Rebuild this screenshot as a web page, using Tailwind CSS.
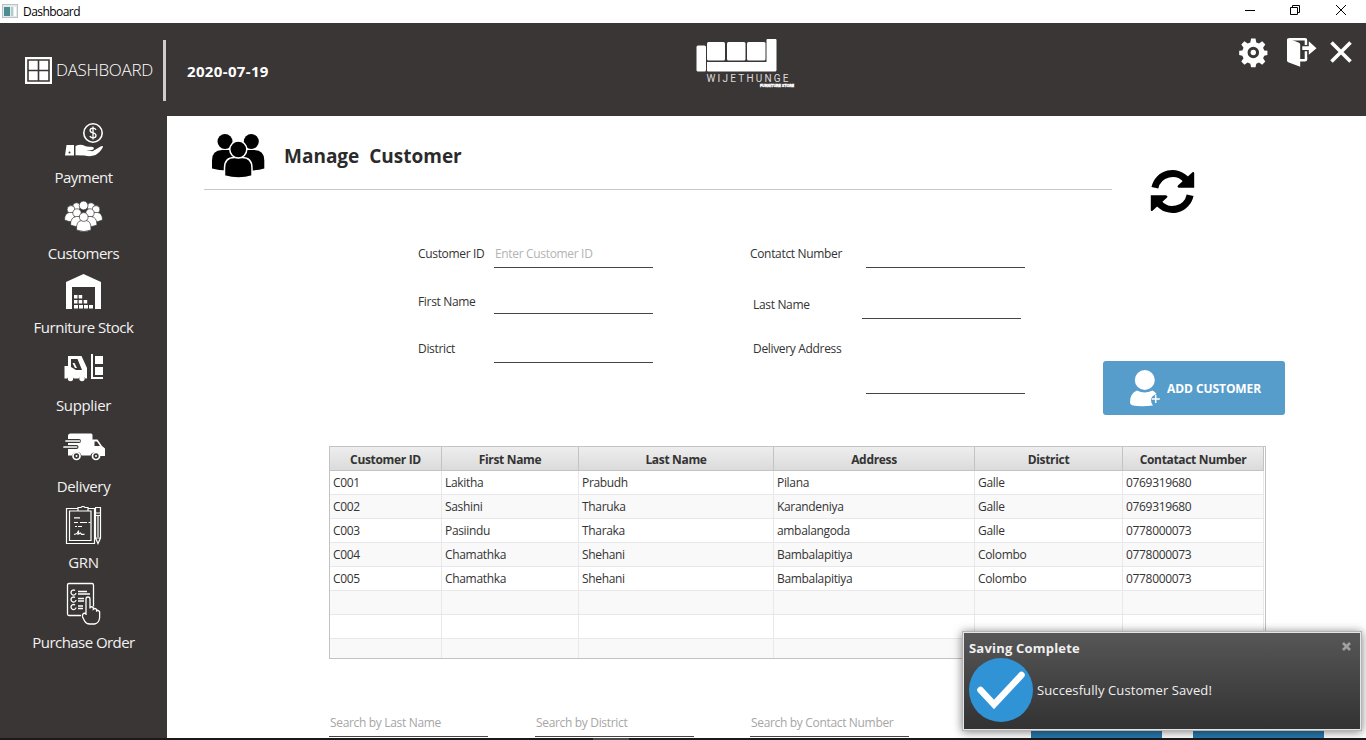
<!DOCTYPE html>
<html lang="en">
<head>
<meta charset="utf-8">
<title>Dashboard</title>
<script src="https://cdn.jsdelivr.net/npm/@tailwindcss/browser@4"></script>
</head>
<body class="bg-white">
<div class="relative flex h-[740px] w-[1366px] flex-col overflow-hidden bg-white font-['Open_Sans','Noto_Sans',sans-serif] text-[12px] text-[#333333]">

  <!-- Window title bar -->
  <div class="flex h-[23px] shrink-0 items-center bg-white text-black">
    <svg class="mb-[2px] ml-[2px] h-[14px] w-[16px]" viewBox="0 0 16 14"><rect x=".5" y=".5" width="15" height="13" fill="#e4eaec" stroke="#b9c2c6"/><rect x="2" y="3" width="6" height="9" fill="#4b8d90"/><rect x="9" y="3" width="2" height="9" fill="#a9d0cb"/><rect x="12" y="3" width="2" height="9" fill="#fff"/></svg>
    <span class="ml-[5px] text-[12px] leading-[20px] tracking-[-0.55px]">Dashboard</span>
    <svg class="ml-auto h-[23px] w-[126px]" viewBox="1240 0 126 23" fill="none" stroke="#000"><path d="M1245 10.500h10M1290.500 7.500h7v7h-7zM1292.500 7.500v-2h7v7h-2M1336 5l10 10M1346 5l-10 10"/></svg>
  </div>

  <!-- Header -->
  <header class="flex h-[93px] shrink-0 items-start bg-[#3a3635] text-white">
    <svg class="mt-[34px] ml-[25px] h-[27px] w-[27px]" viewBox="0 0 27 27"><rect width="27" height="27" fill="#fff"/><path d="M3 3h21v21H3zM13.500 3v21M3 13.500h21" fill="none" stroke="#3a3635" stroke-width="1.600"/></svg>
    <span class="mt-[35px] ml-[4px] w-[103px] whitespace-nowrap text-[17px] leading-[24px] font-light tracking-[-0.3px]">DASHBOARD</span>
    <div class="mt-[17px] ml-[4px] h-[61px] w-[3px] bg-[#cfcccc]"></div>
    <span class="mt-[36px] ml-[21px] w-[100px] whitespace-nowrap text-[15px] leading-[24px] font-bold tracking-[0.35px]">2020-07-19</span>
    <svg class="mt-[14px] ml-[408px] h-[54px] w-[102px]" viewBox="695 37 102 54" fill="#fff">
      <rect x="696.500" y="45.500" width="9.500" height="26" rx="1.500"/>
      <rect x="707" y="42" width="18" height="18.500" rx="1.500"/><rect x="727" y="42" width="18.500" height="18.500" rx="1.500"/><rect x="747" y="42" width="18.500" height="18.500" rx="1.500"/>
      <path d="M707 62h59.500V40q0-1 1-1h8q1 0 1 1V70q0 1.500-1.500 1.500H708q-1 0-1-1z"/>
      <text x="706.500" y="81.500" font-family="Roboto, sans-serif" font-size="10" textLength="82" fill="#dedcdc">WIJETHUNGE</text>
      <text x="760" y="87.300" font-family="Roboto, sans-serif" font-weight="900" font-size="4" textLength="34" stroke="#fff" stroke-width=".3">FURNITURE STORE</text>
    </svg>
    <svg class="mt-[10px] ml-auto h-[40px] w-[131px]" viewBox="1235 33 131 40" fill="#fff">
      <g transform="translate(1253.300 52.500) scale(.96)">
        <path fill-rule="evenodd" d="M-2.300-14.500h4.600l.8 4 2.800 1.200 3.400-2.300 3.200 3.200-2.300 3.400 1.200 2.800 3.300.5v4.400l-3.300.6-1.200 2.800 2.300 3.400-3.200 3.200-3.400-2.300-2.800 1.200-.8 3.800h-4.600l-.8-3.800-2.800-1.200-3.400 2.300-3.200-3.200 2.300-3.400-1.200-2.800-3.300-.6v-4.400l3.300-.5 1.200-2.800-2.300-3.400 3.200-3.200 3.400 2.300 2.800-1.200zM6 0A6 6 0 1 0-6 0 6 6 0 1 0 6 0z"/><circle r="2.800"/>
      </g>
      <path d="M1288.500 39.300h16.500q1 0 1 1v19q0 1-1 1h-6" fill="none" stroke="#fff" stroke-width="2.600"/>
      <path d="M1287 39.500q0-1.500 1.500-1l10.500 4.300q1.200.5 1.200 2v22l-12-4.600q-1.200-.5-1.200-2z"/>
      <path d="M1302.300 46.200h6.500v-5l7.700 7-7.700 6.600v-4.800h-6.500z" stroke="#3a3635" stroke-width="2.400" paint-order="stroke"/>
      <path d="M1331.500 42.500l19 19M1350.500 42.500l-19 19" stroke="#fff" stroke-width="3.600"/>
    </svg>
  </header>

  <div class="flex min-h-0 flex-1">
    <!-- Sidebar -->
    <nav class="flex w-[167px] shrink-0 flex-col items-center bg-[#3a3635] text-[15px] leading-[20px] tracking-[-0.5px] text-[#f2f2f2]">
      <svg class="mt-[7px] h-[35px] w-[39px]" viewBox="64 123 39 35" fill="#fff">
        <circle cx="93" cy="133" r="9.200" fill="none" stroke="#fff" stroke-width="1.600"/>
        <path d="M96 129.800q-1-1.600-3-1.600-2.900 0-2.900 2.300 0 1.800 2.900 2.400 3 .6 3 2.700 0 2.300-3 2.300-2.200 0-3.200-1.700M93 126.500v13" fill="none" stroke="#fff" stroke-width="1.300"/>
        <path d="M66.500 145h7.500v10.500h-9zM75.500 146q5-2.500 9-.3 2.500 1.300 6 1 3.500-.2 3.500 1.500t-3 2l-5 .3 6.500.7 8.500-5q2-.6 2 .8-3 5.500-7.500 8-5 2-11 .5l-9-.3z"/><circle cx="69.500" cy="152.500" r="1" fill="#3a3635"/>
      </svg>
      <span class="mt-[9px]">Payment</span>
      <svg class="mt-[14px] h-[31px] w-[39px]" viewBox="64 201 39 31" fill="#fff" stroke="#3a3635" stroke-width=".7">
        <circle cx="76.500" cy="206.500" r="3.800"/><circle cx="91" cy="206.500" r="3.800"/><circle cx="83.600" cy="205.500" r="4.400"/>
        <circle cx="71" cy="209.500" r="3.900"/><circle cx="96" cy="209.500" r="3.900"/>
        <path d="M73 222q-4 0-8.500-2 0-7 5-7.500h6zM94 222q4 0 8.500-2 0-7-5-7.500h-6z"/>
        <circle cx="77" cy="213" r="4.200"/><circle cx="90" cy="213" r="4.200"/>
        <path d="M70.500 225q0-8 6-8.500h6v10q-7 1-12-1.500zM97 225q0-8-6-8.500h-6v10q7 1 12-1.500z"/>
        <path d="M76.500 230q-.5-9 5-9.500h4.500q5.500.5 5 9.500-7 3-14.500 0z"/><circle cx="83.700" cy="217" r="4.400"/>
      </svg>
      <span class="mt-[11px]">Customers</span>
      <svg class="mt-[10px] h-[37px] w-[37px]" viewBox="65 273 37 37" fill="#fff"><path d="M66 309v-27l17.500-8L101 282v27h-6v-22H72v22z"/><path d="M74 295h3.500v3.500H74zM78.700 295h3.500v3.500h-3.500zM74 300h3.500v3.500H74zM78.700 300h3.500v3.500h-3.500zM83.700 300h3.500v3.500h-3.500zM74 305h4v3.500h-4zM79 305h4v3.500h-4zM84 305h4v3.500h-4zM89 305h4v3.500h-4z"/></svg>
      <span class="mt-[7px] tracking-[-0.45px]">Furniture Stock</span>
      <svg class="mt-[16px] h-[30px] w-[41px]" viewBox="63 353 41 30" fill="#fff">
        <path fill-rule="evenodd" d="M64.500 366h3.500v-10h13.500l5.500 12v10.500h-1.500a4 4 0 0 0-7 0H74a4 4 0 0 0-7 0h-2.500zM71 359v8l5 3h6l-4.500-11zM72.500 363h2l2.500 5h-2z"/>
        <circle cx="70.500" cy="378.500" r="2.700"/><circle cx="82" cy="378.500" r="2.700"/>
        <path d="M91 354h2v23h10v2H91zM95 356h8v8h-8zM95 367h8v8h-8z"/>
      </svg>
      <span class="mt-[12px] tracking-[-0.35px]">Supplier</span>
      <svg class="mt-[17px] h-[29px] w-[43px]" viewBox="62 432 43 29" fill="#fff">
        <path d="M68 436q0-2.500 2.500-2.500H91q1.500 0 1.500 1.500v4.500h5l4.500 6.500 3 2.500v7.500h-5a5 5 0 0 0-9.500-.5H81.500a5 5 0 0 0-9.500 0H68z"/>
        <path d="M94.500 441.500h2.500l3 4.500h-5.500z" fill="#3a3635"/>
        <g stroke="#3a3635" stroke-width="4" stroke-linecap="round"><path d="M66 441h13M64.500 447h12"/></g>
        <g stroke="#fff" stroke-width="1.700" stroke-linecap="round"><path d="M66 441h13.500M64 447h12.500"/></g>
        <g fill="#3a3635" stroke="#fff" stroke-width="1.700"><circle cx="76.500" cy="456" r="3.500"/><circle cx="96" cy="456" r="3.500"/></g><circle cx="76.500" cy="456" r="1"/><circle cx="96" cy="456" r="1"/>
      </svg>
      <span class="mt-[15px] tracking-[-0.35px]">Delivery</span>
      <svg class="mt-[10px] h-[39px] w-[37px]" viewBox="65 506 37 39" fill="none" stroke="#fff" stroke-width="1.200">
        <path d="M78 508.500H66.500v35h28v-35H88M78 507.500h3q.5-1 2-1t2 1h3v3.500H78zM78 511h-8.500v29.500H91V511h-3M95.500 513v-5.500h5V538l-2.500 5.500-2.500-5.500v-25h5M95.500 515.500h5M98 516v21M95.500 538h5"/>
        <path d="M74 517.800h6M74 522.500h4M80 522.500h7M88.500 522.500h2M75 526.500h2M78 526.500h4M74 534.500q4-.5 4.500-4 .3 4-1 4l3-1.500 1 1.300h3"/>
      </svg>
      <span class="mt-[7px] tracking-[-0.35px]">GRN</span>
      <svg class="mt-[10px] h-[43px] w-[35px]" viewBox="66 582 35 43" fill="none" stroke="#fff" stroke-width="1.300">
        <path d="M81 615.500H69q-1.500 0-1.500-1.500v-29q0-1.500 1.500-1.500h23q1.500 0 1.500 1.500v21.500"/>
        <path d="M75 590.500a2.500 2.500 0 1 0 1 2.500M75 597.500a2.500 2.500 0 1 0 1 2.500M75 605a2.500 2.500 0 1 0 1 2.500M78 591.500h9M78 594h12M78 598.500h6M78 601h6M78 606h5M78 608.500h5"/>
        <path d="M86 613v-14q0-2 2-2t2 2v9.500-1q1.500-1.500 3.300.2v1.500q1.500-1.500 3.300.2v1.500q1.500-1 3 .8v6q-.5 5.500-5 6.300h-5q-3.500 0-5-3l-2-4q-1-4 3.400-4zM86 609v6" fill="#3a3635"/>
      </svg>
      <span class="mt-[7px] tracking-[-0.55px]">Purchase Order</span>
    </nav>

    <!-- Content -->
    <main class="flex min-w-0 flex-1 flex-col">
      <div class="flex h-[113px] shrink-0 items-start">
        <div class="ml-[37px] flex h-[74px] w-[908px] items-start border-b border-[#c8c8c8]">
          <svg class="mt-[17px] ml-[7px] h-[46px] w-[55px]" viewBox="211 133 55 46">
            <circle cx="225" cy="141.500" r="7.500"/><circle cx="251.300" cy="141.500" r="7.500"/>
            <path d="M212 168.500v-8q0-10.500 10-10.500h8q6 0 9 4v15.500q-15 2.500-27-1zM264.300 168.500v-8q0-10.500-10-10.500h-8q-6 0-9 4v15.500q15 2.500 27-1z"/>
            <path d="M224.500 176v-8q0-10.500 10-10.500h7.500q10 0 10 10.500v8q-13 4-27.500 0z" stroke="#fff" stroke-width="1.500"/>
            <circle cx="238.300" cy="149.500" r="8.500" stroke="#fff" stroke-width="1.500"/>
          </svg>
          <h1 class="mt-[26px] ml-[18px] text-[19px] leading-[28px] font-bold whitespace-pre text-[#2b2b2b]">Manage  Customer</h1>
        </div>
        <svg class="mt-[53px] ml-[38px] h-[46px] w-[46px]" viewBox="1150 169 46 46">
          <path d="M1154.900 187.800a18 18 0 0 1 31.600-7.600M1190.100 195.200a18 18 0 0 1-31.600 7.600" fill="none" stroke="#000" stroke-width="7"/>
          <path d="M1192.500 172.300q1.700-1 1.700 1v14.500h-15q-2.700-.8-1-2.600zM1152.500 210.700q-1.700 1-1.700-1v-14.500h15q2.700.8 1 2.600z"/>
        </svg>
      </div>

      <div class="flex h-[217px] shrink-0 items-start tracking-[-0.33px]">
        <div class="ml-[251px] flex w-[235px] flex-col pt-[15px] leading-[20px]">
          <div class="flex h-[24px] justify-between"><label>Customer ID</label><div class="w-[159px] border-b border-[#444444] pl-[1px] text-[#b3b3b3]">Enter Customer ID</div></div>
          <div class="mt-[23px] flex h-[23px] justify-between"><label class="pt-[1px]">First Name</label><div class="w-[159px] border-b border-[#444444]"></div></div>
          <div class="mt-[24px] flex h-[25px] justify-between"><label class="pt-[1px]">District</label><div class="w-[159px] border-b border-[#444444]"></div></div>
        </div>
        <div class="ml-[97px] flex w-[275px] flex-col pt-[15px] leading-[20px]">
          <div class="flex h-[24px] justify-between"><label>Contatct Number</label><div class="w-[159px] border-b border-[#444444]"></div></div>
          <div class="mt-[26px] flex h-[25px] justify-between pr-[4px] pl-[3px]"><label class="pt-[1px]">Last Name</label><div class="w-[159px] border-b border-[#444444]"></div></div>
          <div class="mt-[20px] flex h-[55px] justify-between pl-[3px]"><label>Delivery Address</label><div class="w-[159px] border-b border-[#444444]"></div></div>
        </div>
        <button class="mt-[132px] ml-[78px] flex h-[54px] w-[182px] items-center rounded-[3px] bg-[#579dcc] text-[12px] font-bold text-white">
          <svg class="ml-[26px] h-[38px] w-[32px]" viewBox="1129 369 32 38" fill="#fff"><circle cx="1144.800" cy="380" r="10"/><path d="M1130 402q0-8.500 7-11.500 7.500 4 15.500 0 2.500 1 4 3.500-5.500 2-5.500 6 0 3.500 2 5.500-12 1.500-20 0-3-1-3-3.500z"/><path d="M1155.700 395v8M1151.800 399h8" stroke="#fff" stroke-width="1.500"/></svg>
          <span class="mt-[2px] ml-[6px] whitespace-nowrap tracking-[-0.07px]">ADD CUSTOMER</span>
        </button>
      </div>

      <!-- Customer table -->
      <div class="ml-[162px] h-[213px] w-[937px] shrink-0 overflow-hidden border border-[#c3c3c3] bg-white">
        <table class="w-[934px] table-fixed border-separate border-spacing-0 leading-[20px] tracking-[-0.33px] [&_td]:h-[24px] [&_td]:border-r [&_td]:border-b [&_td]:border-[#e8e8ea] [&_td]:p-0 [&_td]:pl-[3px] [&_th]:h-[24px] [&_th]:border-r [&_th]:border-b [&_th]:border-[#c3c3c3] [&_th]:p-0 [&_th]:pt-[2px] [&_th]:leading-[18px] [&_tbody_tr:nth-child(even)]:bg-[#f9f9f9]">
          <colgroup><col class="w-[112px]"><col class="w-[137px]"><col class="w-[195px]"><col class="w-[201px]"><col class="w-[148px]"><col class="w-[141px]"></colgroup>
          <thead class="bg-linear-to-b from-[#eeeeee] to-[#dadada] font-bold"><tr><th>Customer ID</th><th>First Name</th><th>Last Name</th><th>Address</th><th>District</th><th>Contatact Number</th></tr></thead>
          <tbody>
            <tr><td>C001</td><td>Lakitha</td><td>Prabudh</td><td>Pilana</td><td>Galle</td><td>0769319680</td></tr>
            <tr><td>C002</td><td>Sashini</td><td>Tharuka</td><td>Karandeniya</td><td>Galle</td><td>0769319680</td></tr>
            <tr><td>C003</td><td>Pasiindu</td><td>Tharaka</td><td>ambalangoda</td><td>Galle</td><td>0778000073</td></tr>
            <tr><td>C004</td><td>Chamathka</td><td>Shehani</td><td>Bambalapitiya</td><td>Colombo</td><td>0778000073</td></tr>
            <tr><td>C005</td><td>Chamathka</td><td>Shehani</td><td>Bambalapitiya</td><td>Colombo</td><td>0778000073</td></tr>
            <tr><td></td><td></td><td></td><td></td><td></td><td></td></tr>
            <tr><td></td><td></td><td></td><td></td><td></td><td></td></tr>
            <tr><td></td><td></td><td></td><td></td><td></td><td></td></tr>
          </tbody>
        </table>
      </div>

      <!-- Search fields and actions -->
      <div class="flex h-[79px] shrink-0 items-start pt-[54px] leading-[20px] tracking-[-0.33px] text-[#a6a6a6]">
        <div class="ml-[162px] h-[24px] w-[159px] border-b border-[#444444] pl-[1px]">Search by Last Name</div>
        <div class="ml-[47px] h-[24px] w-[159px] border-b border-[#444444] pl-[1px]">Search by District</div>
        <div class="ml-[56px] h-[24px] w-[159px] border-b border-[#444444] pl-[1px]">Search by Contact Number</div>
        <div class="mt-[10px] ml-[122px] h-[15px] w-[131px] bg-[#2778ad]"></div>
        <div class="mt-[10px] ml-[31px] h-[15px] w-[131px] bg-[#2778ad]"></div>
      </div>
    </main>
  </div>

  <div class="flex h-[2px] shrink-0 bg-[#1b1919]"><div class="ml-[593px] w-[36px] bg-[#4a4848]"></div></div>

  <!-- Notification -->
  <div class="absolute top-[631px] left-[962px] flex h-[100px] w-[400px] flex-col border border-[#b4b4b4] bg-linear-to-b from-[#575757] to-[#323232] text-[#f0f0f0] shadow-[0_1px_9px_rgba(0,0,0,0.5)] ring-1 ring-[#e6e6e6] ring-inset">
    <div class="flex h-[25px] items-center pl-[6px]">
      <span class="mt-[7px] text-[13px] leading-[20px] font-bold tracking-[0.2px]">Saving Complete</span>
      <svg class="mt-[4px] mr-[10px] ml-auto h-[9px] w-[9px]" viewBox="0 0 9 9"><path d="M1 1l7 7M8 1L1 8" stroke="#a0a0a0" stroke-width="2.600"/></svg>
    </div>
    <div class="flex items-center pl-[6px]">
      <svg class="h-[66px] w-[64px]" viewBox="969 657 64 66"><circle cx="1001" cy="690" r="32" fill="#3093d6"/><path d="M980.500 690l13.500 14.500 27.500-29.500" fill="none" stroke="#fff" stroke-width="6.500" stroke-linecap="round"/></svg>
      <span class="ml-[4px] text-[13px] leading-[20px] tracking-[0.1px]">Succesfully Customer Saved!</span>
    </div>
  </div>
</div>
</body>
</html>
